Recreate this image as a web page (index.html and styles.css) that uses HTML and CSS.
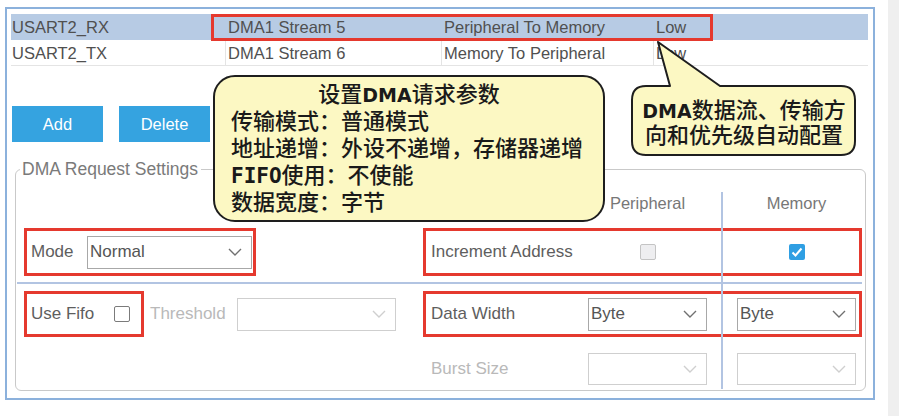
FILE: index.html
```html
<!DOCTYPE html>
<html lang="zh-CN">
<head>
  <meta charset="UTF-8">
  <meta name="viewport" content="width=device-width, initial-scale=1.0">
  <title>DMA Settings</title>
  <link rel="stylesheet" href="styles.css">
</head>
<body>
  <div class="page">
    <div class="panel">
      <div class="table">
        <div class="row selected">
          <div class="cell c1">USART2_RX</div>
          <div class="cell c2">DMA1 Stream 5</div>
          <div class="cell c3">Peripheral To Memory</div>
          <div class="cell c4">Low</div>
        </div>
        <div class="row">
          <div class="cell c1">USART2_TX</div>
          <div class="cell c2">DMA1 Stream 6</div>
          <div class="cell c3">Memory To Peripheral</div>
          <div class="cell c4">Low</div>
        </div>
        <div class="row-mark"></div>
      </div>

      <div class="actions">
        <button class="btn">Add</button>
        <button class="btn">Delete</button>
      </div>

      <fieldset class="settings">
        <legend>DMA Request Settings</legend>
        <div class="settings-body">
          <div class="line head">
            <div class="side">
              <span></span>
              <span class="col">Peripheral</span>
              <span class="col">Memory</span>
            </div>
          </div>

          <div class="line row-a">
            <div class="mark mode">
              <span class="label mode-label">Mode</span>
              <div class="select">
                <span>Normal</span>
                <svg class="chev" viewBox="0 0 14 8"><polyline points="1,1 7,7 13,1"/></svg>
              </div>
            </div>
            <div class="side mark">
              <span class="label">Increment Address</span>
              <span class="col"><span class="check"></span></span>
              <span class="col"><span class="check on">
                <svg viewBox="0 0 16 16"><polyline points="3.5,8.5 6.5,11.5 12.5,4.5"/></svg>
              </span></span>
            </div>
          </div>

          <div class="divider"></div>

          <div class="line row-b">
            <div class="mark fifo">
              <span class="label fifo-label">Use Fifo</span>
              <span class="check plain"></span>
            </div>
            <span class="label off threshold">Threshold</span>
            <div class="select off wide">
              <span></span>
              <svg class="chev" viewBox="0 0 14 8"><polyline points="1,1 7,7 13,1"/></svg>
            </div>
            <div class="side mark">
              <span class="label">Data Width</span>
              <div class="select col">
                <span>Byte</span>
                <svg class="chev" viewBox="0 0 14 8"><polyline points="1,1 7,7 13,1"/></svg>
              </div>
              <div class="select col">
                <span>Byte</span>
                <svg class="chev" viewBox="0 0 14 8"><polyline points="1,1 7,7 13,1"/></svg>
              </div>
            </div>
          </div>

          <div class="line row-c">
            <div class="side">
              <span class="label off">Burst Size</span>
              <div class="select off col">
                <span></span>
                <svg class="chev" viewBox="0 0 14 8"><polyline points="1,1 7,7 13,1"/></svg>
              </div>
              <div class="select off col">
                <span></span>
                <svg class="chev" viewBox="0 0 14 8"><polyline points="1,1 7,7 13,1"/></svg>
              </div>
            </div>
          </div>

          <div class="vline"></div>
        </div>
      </fieldset>
    </div>

    <div class="note note-req">
      <div class="title">设置<b class="lat">DMA</b>请求参数</div>
      <div>传输模式：普通模式</div>
      <div>地址递增：外设不递增，存储器递增</div>
      <div><b class="mono">FIFO</b>使用：不使能</div>
      <div>数据宽度：字节</div>
    </div>

    <div class="note-auto">
      <svg class="bubble" viewBox="0 0 228 120">
        <path d="M16 48 L40 48 L28 4 L90 48 L211 48 Q225 48 225 62 L225 103 Q225 117 211 117 L16 117 Q2 117 2 103 L2 62 Q2 48 16 48 Z"/>
      </svg>
      <div class="text">
        <div><b class="lat">DMA</b>数据流、传输方</div>
        <div>向和优先级自动配置</div>
      </div>
    </div>
  </div>
</body>
</html>
```

FILE: styles.css
```css
* {
  box-sizing: border-box;
}
body {
  margin: 0;
  background: #efefef;
  font-family: "Liberation Sans", Arial, sans-serif;
  color: #555;
}
.page {
  position: relative;
  width: 888px;
  height: 416px;
  background: #fff;
  padding: 7px 0 0 5px;
}
.panel {
  width: 870px;
  height: 393px;
  border: 2px solid #8cb1dc;
}

/* request table */
.table {
  position: relative;
  width: 857px;
  margin: 5px 0 0 4px;
}
.row {
  display: flex;
  height: 26px;
  border-bottom: 1px solid #e4e4e4;
}
.row.selected {
  background: #b7cbe4;
  border-bottom: none;
}
.cell {
  font-size: 16.5px;
  line-height: 26px;
  padding-left: 2px;
  white-space: nowrap;
  color: #505050;
}
.row .cell + .cell {
  border-left: 1px solid #e4e4e4;
}
.row.selected .cell + .cell {
  border-left-color: transparent;
}
.c1 { width: 214px; padding-left: 1px; }
.c2 { width: 216px; }
.c3 { width: 212px; }
.c4 { width: 215px; }
.row-mark {
  position: absolute;
  left: 200px;
  top: 0;
  width: 502px;
  height: 27px;
  border: 3px solid #e5392e;
}

/* buttons */
.actions {
  display: flex;
  gap: 16px;
  margin: 40px 0 0 5px;
}
.btn {
  width: 91px;
  height: 36px;
  border: none;
  background: #35a3e0;
  color: #fff;
  font-family: "Liberation Sans", Arial, sans-serif;
  font-size: 16.5px;
}

/* settings group */
.settings {
  width: 851px;
  margin: 17px 0 0 8px;
  padding: 0 0 8px;
  border: 1px solid #c9c9c9;
  border-radius: 6px;
}
.settings legend {
  margin-left: 4px;
  padding: 0 3px 0 2px;
  font-size: 17.5px;
  line-height: 20px;
  color: #7a7a7a;
}
.settings-body {
  position: relative;
}
.line {
  display: flex;
  align-items: center;
  padding-left: 8px;
}
.label {
  font-size: 17px;
  color: #5e5e5e;
  white-space: nowrap;
}
.label.off {
  color: #b9b9b9;
}
.mark {
  border: 3px solid #e5392e;
  display: flex;
  align-items: center;
}
.side {
  display: grid;
  grid-template-columns: 157px 119px 149px;
  align-items: center;
  width: 439px;
  margin-left: auto;
  margin-right: 3px;
  padding: 0 3px 0 5px;
  border: 3px solid transparent;
}
.side.mark {
  border-color: #e5392e;
}
.col {
  display: flex;
  justify-content: center;
  text-align: center;
}
.side > .col:last-child {
  justify-self: end;
  width: 119px;
}
.head {
  height: 30px;
  margin-top: 9px;
}
.head .col {
  font-size: 16.5px;
  color: #777;
}
.row-a {
  height: 48px;
  margin-top: 10px;
}
.row-a .mark,
.row-a .side {
  height: 48px;
}
.mode {
  width: 232px;
  padding-left: 4px;
}
.mode-label {
  width: 56px;
}
.divider {
  height: 2px;
  margin: 6px 3px 0 1px;
  background: #b2c4e2;
}
.row-b {
  height: 46px;
  margin-top: 7px;
}
.row-b .mark,
.row-b .side {
  height: 46px;
}
.fifo {
  width: 120px;
  padding-left: 4px;
}
.fifo-label {
  width: 83px;
}
.threshold {
  width: 87px;
  margin-left: 6px;
}
.row-c {
  height: 32px;
  margin-top: 13px;
}
.row-c .side {
  height: 32px;
}

/* controls */
.select {
  display: flex;
  align-items: center;
  justify-content: space-between;
  width: 165px;
  height: 33px;
  padding: 0 9px 0 2px;
  border: 1px solid #a8a8a8;
  background: #fff;
  font-size: 17px;
  color: #555;
}
.select.wide {
  width: 159px;
}
.select.col {
  width: 119px;
}
.row-c .select {
  height: 32px;
}
.select.off {
  border-color: #cfcfcf;
}
.chev {
  width: 14px;
  height: 8px;
  fill: none;
  stroke: #707070;
  stroke-width: 1.4;
}
.select.off .chev {
  stroke: #cfcfcf;
}
.check {
  display: inline-block;
  width: 16px;
  height: 16px;
  border: 1.5px solid #c4c4c4;
  border-radius: 2px;
  background: #eeeef0;
}
.check.plain {
  border-color: #7b7b7b;
  background: #fff;
}
.check.on {
  border: none;
  background: #2f9fe3;
}
.check svg {
  display: block;
  width: 16px;
  height: 16px;
  fill: none;
  stroke: #fff;
  stroke-width: 2;
}
.vline {
  position: absolute;
  left: 705px;
  top: 4px;
  width: 2px;
  height: 197px;
  background: #b2c4e2;
}

/* callouts */
.note {
  position: absolute;
  left: 213px;
  top: 75px;
  width: 392px;
  height: 147px;
  padding: 2px 0 0 16px;
  border: 2px solid #1e1e1e;
  border-radius: 22px;
  background: #fcf8c3;
  font-family: "Noto Sans CJK SC", sans-serif;
  font-weight: 500;
  font-size: 22px;
  line-height: 27px;
  color: #1a1a1a;
}
.note > div {
  height: 27px;
  white-space: nowrap;
}
.note .title {
  text-align: center;
  padding-right: 16px;
}
.lat {
  font-family: "DejaVu Sans", sans-serif;
  font-weight: bold;
  font-size: 19px;
  line-height: 1;
}
.mono {
  font-family: "DejaVu Sans Mono", monospace;
  font-weight: bold;
  font-size: 21px;
  line-height: 1;
}
.note-auto {
  position: absolute;
  left: 630px;
  top: 38px;
  width: 228px;
  height: 120px;
}
.bubble {
  position: absolute;
  left: 0;
  top: 0;
  width: 228px;
  height: 120px;
  fill: #fcf8c3;
  stroke: #1e1e1e;
  stroke-width: 2;
  stroke-linejoin: round;
}
.note-auto .text {
  position: relative;
  padding-top: 58px;
  text-align: center;
  font-family: "Noto Sans CJK SC", sans-serif;
  font-weight: 500;
  font-size: 22px;
  line-height: 25px;
  color: #1a1a1a;
}
.note-auto .text > div {
  height: 25px;
}
```
